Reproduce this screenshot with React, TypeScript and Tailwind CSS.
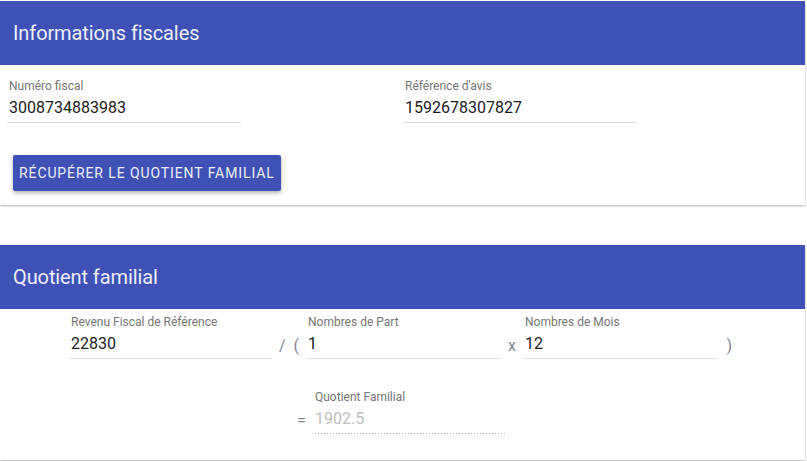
import React from "react";

type FieldProps = {
  label: string;
  value: string;
  width: string;
  muted?: boolean;
};

const Field: React.FC<FieldProps> = ({ label, value, width, muted }) => (
  <div className={`flex flex-col ${width}`}>
    <label className="pl-[2px] text-[12px] leading-[14px] text-[#757575]">{label}</label>
    <div
      className={`px-[2px] pt-[5px] text-[16px] leading-[20px] ${
        muted
          ? "pb-[5px] text-[#bdbdbd] bg-[linear-gradient(to_right,#b0b0b0_1px,transparent_1px)] bg-[length:3px_1px] bg-repeat-x bg-bottom"
          : "pb-[4px] text-[#212121] border-b border-[#e0e0e0]"
      }`}
    >
      {value}
    </div>
  </div>
);

const CardHeader: React.FC<{ title: string }> = ({ title }) => (
  <div className="h-16 bg-[#3f51b5] flex items-center px-[13px]">
    <h2 className="text-[20px] tracking-[-0.1px] text-white/90">{title}</h2>
  </div>
);

const Op: React.FC<{ children: React.ReactNode; width: string; align?: string }> = ({
  children,
  width,
  align = "text-center",
}) => (
  <span className={`${width} ${align} text-[16px] leading-[20px] text-[#7f8794] pb-[3px] whitespace-pre`}>
    {children}
  </span>
);

export default function App() {
  return (
    <div className="bg-white min-h-[461px] w-[807px] pt-[1px] font-['Roboto',sans-serif]">
      <section className="w-[805px] bg-white shadow-[0_1px_2px_rgba(0,0,0,0.3)]">
        <CardHeader title="Informations fiscales" />
        <div className="grid grid-cols-[396px_1fr] pl-[7px] pt-[14px]">
          <Field label="Numéro fiscal" value="3008734883983" width="w-[234px]" />
          <Field label="Référence d'avis" value="1592678307827" width="w-[234px]" />
        </div>
        <div className="px-[13px] pt-[32px] pb-[14px]">
          <button className="h-9 px-[6px] rounded-[2px] bg-[#3f51b5] text-[14px] tracking-[0.9px] text-white/90 shadow-[0_2px_4px_rgba(0,0,0,0.3)]">
            RÉCUPÉRER LE QUOTIENT FAMILIAL
          </button>
        </div>
      </section>

      <section className="mt-[40px] w-[805px] bg-white shadow-[0_1px_2px_rgba(0,0,0,0.3)]">
        <CardHeader title="Quotient familial" />
        <div className="flex flex-col items-center pt-[6px] pb-[26px]">
          <div className="flex items-end pr-[4px]">
            <Field label="Revenu Fiscal de Référence" value="22830" width="w-[203px]" />
            <Op width="w-[34px]">{"/  ("}</Op>
            <Field label="Nombres de Part" value="1" width="w-[195px]" />
            <Op width="w-[22px]">x</Op>
            <Field label="Nombres de Mois" value="12" width="w-[195px]" />
            <Op width="w-[14px]" align="text-right">)</Op>
          </div>
          <div className="flex items-end mt-[31px] pr-[2px]">
            <Op width="w-[16px]" align="text-left">=</Op>
            <Field label="Quotient Familial" value="1902.5" width="w-[193px]" muted />
          </div>
        </div>
      </section>
    </div>
  );
}
